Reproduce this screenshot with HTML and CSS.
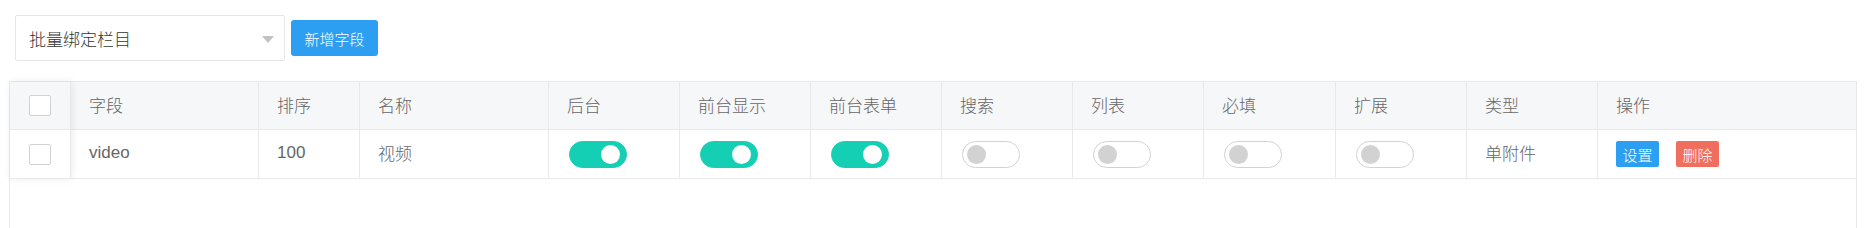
FILE: index.html
```html
<!DOCTYPE html>
<html lang="zh-CN">
<head>
<meta charset="utf-8">
<title>字段管理</title>
<link rel="stylesheet" href="styles.css">
</head>
<body>
<div class="page">
  <div class="toolbar">
    <div class="select">
      <span class="select-text">批量绑定栏目</span>
      <span class="caret"></span>
    </div>
    <button class="btn btn-blue btn-sm">新增字段</button>
  </div>

  <div class="table">
    <div class="fixed-col">
      <div class="cell head check"><span class="checkbox"></span></div>
      <div class="cell row check"><span class="checkbox"></span></div>
    </div>
    <div class="grid">
      <div class="cell head">字段</div>
      <div class="cell head">排序</div>
      <div class="cell head">名称</div>
      <div class="cell head">后台</div>
      <div class="cell head">前台显示</div>
      <div class="cell head">前台表单</div>
      <div class="cell head">搜索</div>
      <div class="cell head">列表</div>
      <div class="cell head">必填</div>
      <div class="cell head">扩展</div>
      <div class="cell head">类型</div>
      <div class="cell head last">操作</div>

      <div class="cell row latin">video</div>
      <div class="cell row latin">100</div>
      <div class="cell row">视频</div>
      <div class="cell row"><span class="switch on"><i></i></span></div>
      <div class="cell row"><span class="switch on"><i></i></span></div>
      <div class="cell row"><span class="switch on"><i></i></span></div>
      <div class="cell row"><span class="switch"><i></i></span></div>
      <div class="cell row"><span class="switch"><i></i></span></div>
      <div class="cell row"><span class="switch"><i></i></span></div>
      <div class="cell row"><span class="switch"><i></i></span></div>
      <div class="cell row">单附件</div>
      <div class="cell row last actions">
        <button class="btn btn-blue btn-xs">设置</button>
        <button class="btn btn-red btn-xs">删除</button>
      </div>
    </div>
  </div>
</div>
</body>
</html>
```

FILE: styles.css
```css
* { box-sizing: border-box; }

html, body {
  margin: 0;
  padding: 0;
  background: #fff;
  overflow: hidden;
}

body {
  font-family: "Liberation Sans", "Noto Sans CJK SC", sans-serif;
  color: #666;
  font-size: 17px;
  font-weight: 300;
}

.page {
  padding: 15px 9px 0 9px;
  height: 228px;
}

.toolbar {
  display: flex;
  align-items: center;
  gap: 6px;
  padding-left: 6px;
  height: 46px;
}

.select {
  width: 270px;
  height: 46px;
  border: 1px solid #e6e6e6;
  border-radius: 2px;
  background: #fff;
  display: flex;
  align-items: center;
  justify-content: space-between;
  padding: 0 10px 0 13px;
}

.select-text {
  color: #333;
  font-size: 17px;
}

.caret {
  width: 0;
  height: 0;
  border-left: 6.5px solid transparent;
  border-right: 6.5px solid transparent;
  border-top: 7px solid #c2c2c2;
  margin-top: 2px;
}

.btn {
  border: none;
  color: #fff;
  font-family: "Liberation Sans", "Noto Sans CJK SC", sans-serif;
  font-weight: 300;
  border-radius: 2px;
  cursor: pointer;
  padding: 0;
  display: inline-flex;
  align-items: center;
  justify-content: center;
}

.btn-sm {
  height: 36px;
  width: 87px;
  font-size: 15px;
  border-radius: 3px;
}

.btn-xs {
  height: 26px;
  width: 43px;
  font-size: 15px;
}

.btn-blue { background: #2d9ff2; }
.btn-red { background: #f06e5d; }

.table {
  margin-top: 20px;
  width: 1848px;
  height: 200px;
  border: 1px solid #e9e9e9;
  display: flex;
  align-items: flex-start;
}

.fixed-col {
  width: 61px;
  flex: none;
  display: flex;
  flex-direction: column;
  position: relative;
  z-index: 1;
  box-shadow: 1px 0 8px rgba(0, 0, 0, 0.08);
}

.grid {
  flex: 1;
  display: grid;
  grid-template-columns: 188px 101px 189px 131px 131px 131px 131px 131px 132px 131px 131px 258px;
}

.cell {
  border-right: 1px solid #e9e9e9;
  border-bottom: 1px solid #e9e9e9;
  display: flex;
  align-items: center;
  padding: 0 18px;
  white-space: nowrap;
  background: #fff;
}

.cell.last { border-right: none; }

.cell.head {
  height: 48px;
  background: #f6f7f9;
  padding-bottom: 2px;
}

.cell.row {
  height: 49px;
  padding-bottom: 4px;
}

.cell.row.latin {
  padding-bottom: 2px;
}

.cell.check {
  justify-content: center;
  padding: 0;
}

.latin {
  font-size: 17px;
  font-weight: 400;
}

.checkbox {
  width: 22px;
  height: 21px;
  border: 1px solid #d2d2d2;
  border-radius: 2px;
  background: #fff;
}

.switch {
  position: relative;
  width: 58px;
  height: 27px;
  border-radius: 14px;
  border: 1px solid #d2d2d2;
  background: #fff;
  margin-left: 2px;
  margin-top: 4px;
}

.switch i {
  position: absolute;
  top: 3px;
  left: 4px;
  width: 19px;
  height: 19px;
  border-radius: 50%;
  background: #d2d2d2;
}

.switch.on {
  background: #15cfb5;
  border-color: #15cfb5;
}

.switch.on i {
  left: auto;
  right: 6px;
  background: #fff;
}

.actions {
  gap: 17px;
}

.actions .btn {
  margin-top: 4px;
}
```
